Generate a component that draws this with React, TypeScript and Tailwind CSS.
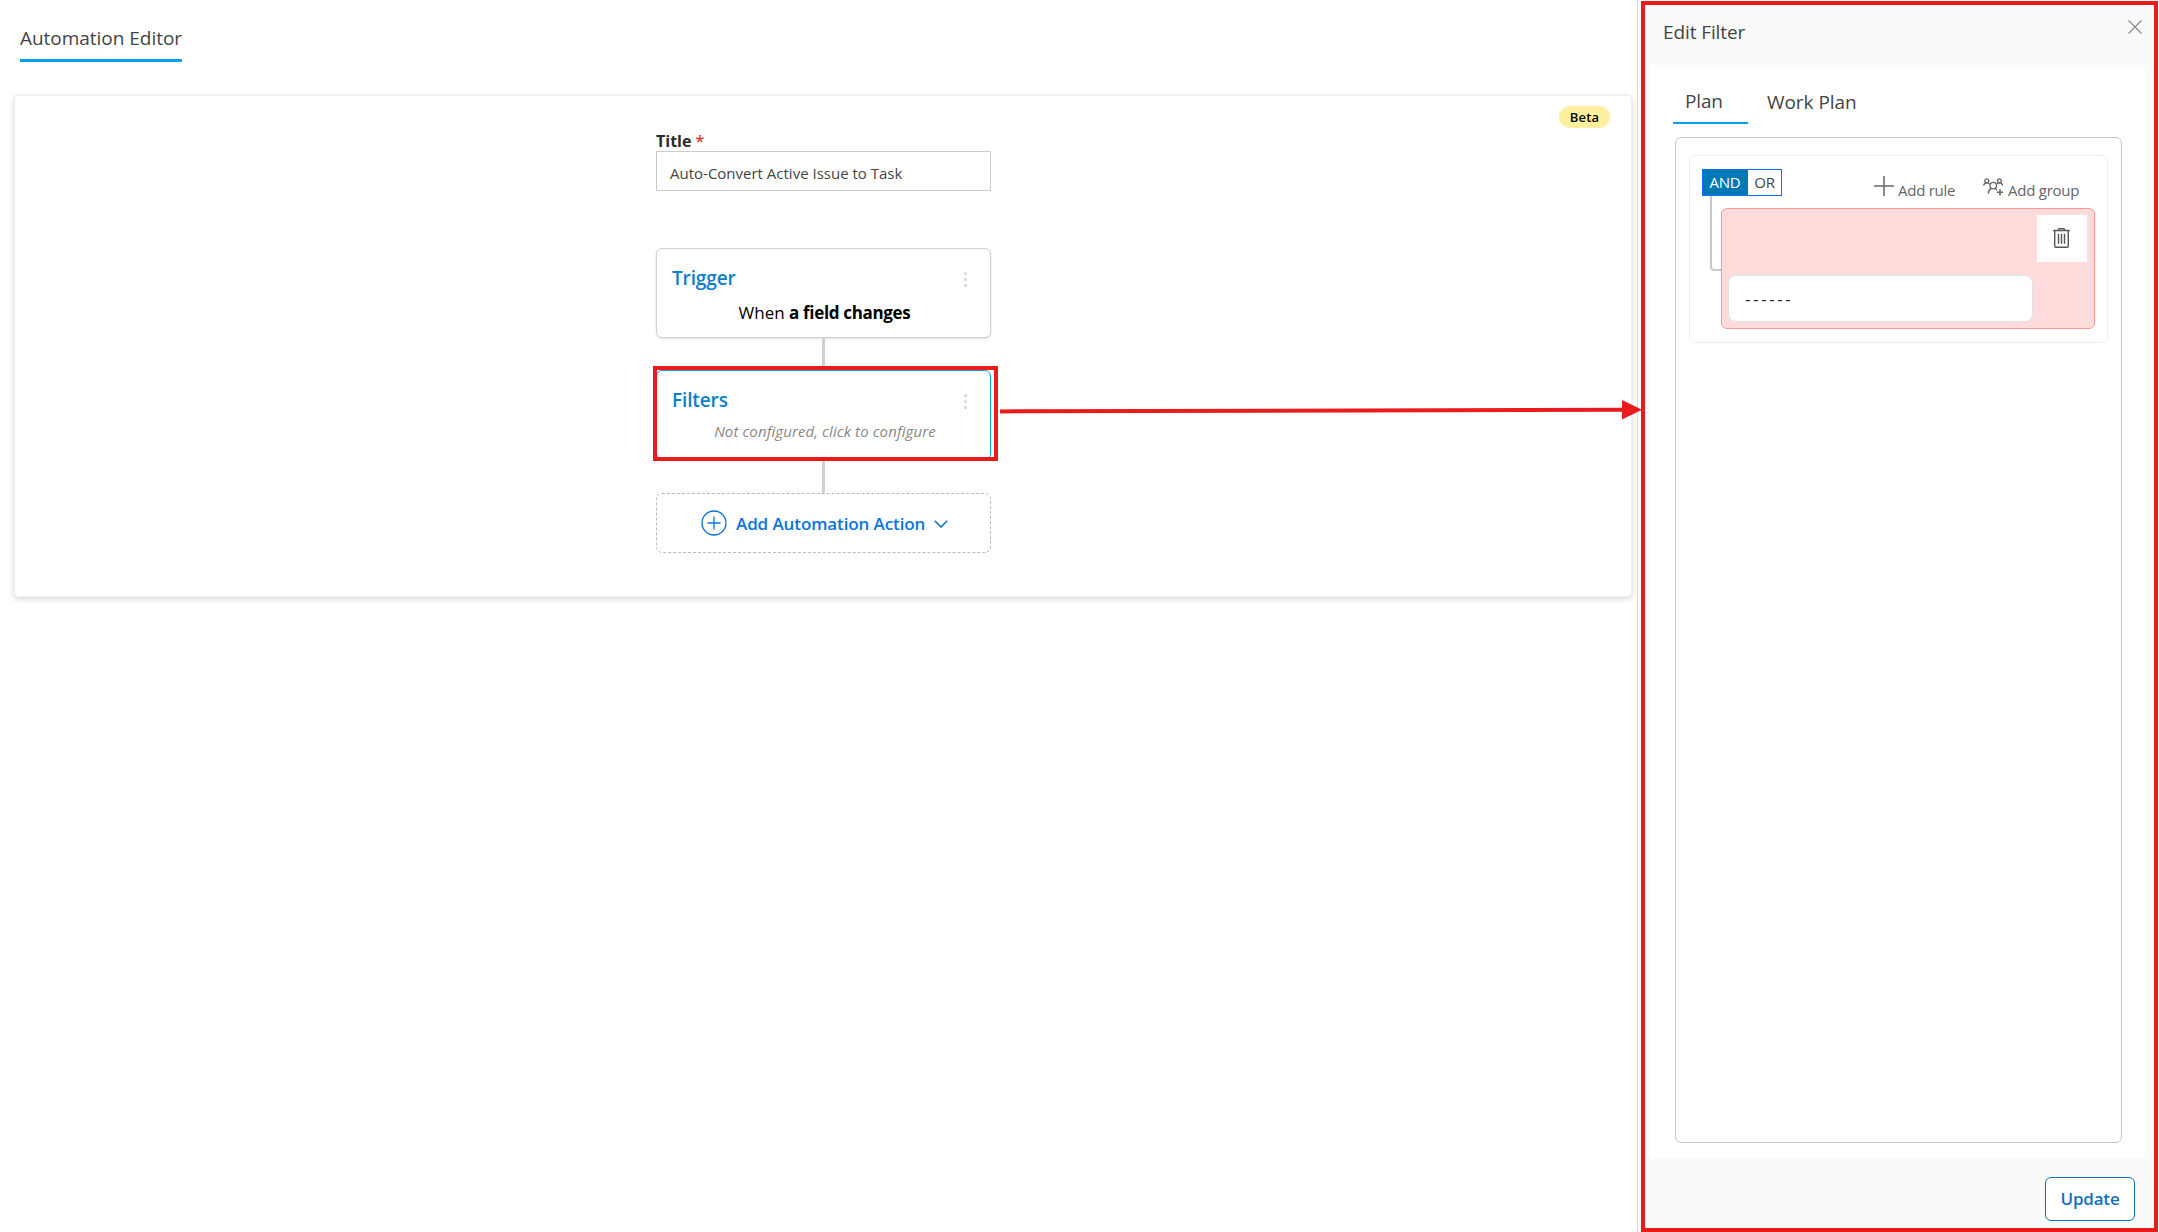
import React from 'react';

// --- Icons ---
const PlusCircleIcon: React.FC = () => (
  <svg className="h-[26px] w-[26px] shrink-0" viewBox="0 0 26 26" fill="none" stroke="currentColor" strokeWidth="1.3">
    <circle cx="13" cy="13" r="12" />
    <path d="M6.5 13h13M13 6.5v13" />
  </svg>
);

const ChevronIcon: React.FC = () => (
  <svg className="h-2 w-3.5 shrink-0" viewBox="0 0 14 8" fill="none" stroke="currentColor" strokeWidth="1.6">
    <path d="M0.8 0.8L7 7l6.2-6.2" />
  </svg>
);

const CloseIcon: React.FC = () => (
  <svg className="h-3.5 w-3.5" viewBox="0 0 14 14" fill="none" stroke="currentColor" strokeWidth="1.2">
    <path d="M0.5 0.5l13 13M13.5 0.5l-13 13" />
  </svg>
);

const PlusIcon: React.FC = () => (
  <svg className="h-5 w-5 shrink-0" viewBox="0 0 20 20" fill="none" stroke="currentColor" strokeWidth="1.5">
    <path d="M0 10h20M10 0v20" />
  </svg>
);

const AddGroupIcon: React.FC = () => (
  <svg className="h-[18px] w-[21px] shrink-0" viewBox="0 0 21 18" fill="none" stroke="currentColor" strokeWidth="1.3">
    <circle cx="3.8" cy="2.8" r="2" />
    <circle cx="16.4" cy="2.8" r="2" />
    <circle cx="10.2" cy="7.6" r="3.3" />
    <path d="M0.7 7.6C0.9 5.8 2.1 4.9 3.8 4.9c1.3 0 2.3 0.5 3 1.4" />
    <path d="M19.6 7.6c-0.2-1.8-1.4-2.7-3.2-2.7-1.3 0-2.3 0.5-3 1.4" />
    <path d="M5.2 15.6c0.3-2.7 1.3-4.4 3.1-5.2M12.1 10.4c0.9 0.5 1.5 1.1 1.9 2" />
    <path d="M17 11.2v6.2M13.9 14.3h6.2" strokeWidth="1.6" />
  </svg>
);

const TrashIcon: React.FC = () => (
  <svg className="h-5 w-[17px]" viewBox="0 0 17 20" fill="none" stroke="currentColor" strokeWidth="1.4">
    <path d="M0.3 2.5h16.4M5.7 2.5V1.5c0-0.500 0.400-0.900 0.900-0.900h3.800c0.500 0 0.900 0.400 0.900 0.900v1" />
    <path d="M1.700 2.500v15.500c0 0.800 0.500 1.300 1.300 1.300h11c0.800 0 1.300-0.500 1.300-1.300V2.500" />
    <path d="M5.500 5.800v10M8.500 5.800v10M11.500 5.800v10" />
  </svg>
);

// --- Flow card ---
interface FlowCardProps {
  title: string;
  active?: boolean;
  children: React.ReactNode;
}

const FlowCard: React.FC<FlowCardProps> = ({ title, active, children }) => (
  <div
    className={`h-[90px] w-full rounded-md border bg-white ${
      active ? 'border-[#0aa0ee]' : 'border-[#cfd0d2] shadow-sm'
    }`}
  >
    <div className="flex justify-between pt-[17px] pr-[23px] pl-[15px]">
      <h3 className="text-[19px] leading-6 font-semibold tracking-[-0.12px] text-[#0a80cc]">{title}</h3>
      <div className="mt-[6px] flex flex-col gap-[3px]">
        <span className="h-[3px] w-[3px] rounded-full bg-[#d3d3d3]" />
        <span className="h-[3px] w-[3px] rounded-full bg-[#d3d3d3]" />
        <span className="h-[3px] w-[3px] rounded-full bg-[#d3d3d3]" />
      </div>
    </div>
    {children}
  </div>
);

const Connector: React.FC<{ className: string }> = ({ className }) => (
  <div className={`w-[3px] bg-[#cfd0d6] ${className}`} />
);

// --- Automation editor ---
const AutomationEditor: React.FC = () => (
  <main className="w-[1637px] shrink-0">
    <div className="flex pt-[26px] pl-5">
      <h1 className="border-b-[3px] border-[#03a2f0] pb-[9px] text-[19px] leading-6 tracking-[-0.03px] whitespace-nowrap text-[#444]">
        Automation Editor
      </h1>
    </div>

    <section className="relative mt-[33px] ml-[14px] flex h-[502px] w-[1618px] flex-col items-center rounded border border-[#eee] bg-white pt-9 pl-px shadow-[0_2px_6px_rgba(0,0,0,0.16)]">
      <span className="absolute top-[10px] right-[21px] flex h-[22px] w-[51px] items-center justify-center rounded-full bg-[#fff0a0] pt-px text-[13px] font-semibold tracking-[0.25px] text-black">
        Beta
      </span>

      <div className="flex w-[335px] flex-col items-center">
        <label className="w-full text-[16px] leading-[19px] font-bold text-[#2b2b2b]">
          Title <span className="font-semibold text-[#d83b2b]">*</span>
        </label>
        <div className="flex h-10 w-full items-center border border-[#ccc] pt-[5px] pl-[13px] text-[15px] text-[#444]">
          Auto-Convert Active Issue to Task
        </div>

        <div className="h-[57px]" />
        <FlowCard title="Trigger">
          <p className="mt-[11px] pl-[2px] text-center text-[17px] leading-6 text-black">
            When <b className="font-bold tracking-[-0.33px]">a field changes</b>
          </p>
        </FlowCard>
        <Connector className="h-8" />
        <FlowCard title="Filters" active>
          <p className="mt-[7px] pl-[3px] text-center text-[15px] leading-6 tracking-[0.1px] text-[#888] italic">
            Not configured, click to configure
          </p>
        </FlowCard>
        <Connector className="h-[33px]" />
        <button className="flex h-[60px] w-full items-center rounded-md border border-dashed border-[#bbb] pl-[44px] text-[#0b74dc]">
          <PlusCircleIcon />
          <span className="ml-[9px] w-[190px] pt-[2px] text-left text-[17px] leading-6 font-semibold tracking-[-0.1px] whitespace-nowrap">
            Add Automation Action
          </span>
          <span className="ml-[8px] pt-[2px]">
            <ChevronIcon />
          </span>
        </button>
      </div>
    </section>
  </main>
);

// --- Filter rule builder ---
const RuleBuilder: React.FC = () => (
  <div className="h-[188px] rounded-md border border-[#eee] pt-[13px] pr-3 pl-3">
    <div className="flex h-8 items-start">
      <div className="flex h-[27px] w-20 border border-[#0d6efd] text-[15px] leading-6 tracking-[-0.3px]">
        <span className="w-[45px] border-r border-[#0d6efd] bg-[#0078b6] text-center text-white">AND</span>
        <span className="flex-1 text-center text-[#444]">OR</span>
      </div>
      <div className="ml-auto flex pr-[15px] text-[15px] leading-6 tracking-[-0.25px] text-[#666]">
        <button className="flex pt-[7px]">
          <PlusIcon />
          <span className="mt-[2px] ml-1 w-[57px] text-left whitespace-nowrap">Add rule</span>
        </button>
        <button className="ml-[28px] flex pt-[9px]">
          <AddGroupIcon />
          <span className="ml-1 w-[72px] text-left whitespace-nowrap">Add group</span>
        </button>
      </div>
    </div>
    <div className="flex">
      <div className="-mt-[5px] ml-2 h-[75px] w-[11px] rounded-bl border-b-2 border-l-2 border-[#c8c8c8]" />
      <div className="mt-[7px] h-[121px] w-[374px] rounded-md border border-[#ff9696] bg-[#ffdcdc] p-[6px]">
        <div className="flex justify-end pr-[1px]">
          <button className="flex h-[47px] w-[50px] items-center justify-center bg-white pr-px pb-px text-[#555]">
            <TrashIcon />
          </button>
        </div>
        <div className="mt-[13px] flex h-[47px] w-[305px] items-center rounded-lg border border-[#dee2e6] bg-white pl-4 text-[17px] tracking-[2.6px] text-[#222]">
          ------
        </div>
      </div>
    </div>
  </div>
);

// --- Edit filter panel ---
const EditFilterPanel: React.FC = () => (
  <aside className="flex w-[522px] shrink-0 flex-col border-l border-[#ddd] bg-[#fafafa]">
    <header className="flex h-[65px] justify-between pt-5 pr-[17px] pl-[25px]">
      <h2 className="text-[19px] leading-6 tracking-[-0.1px] text-[#444]">Edit Filter</h2>
      <span className="text-[#8a8a8a]">
        <CloseIcon />
      </span>
    </header>

    <div className="ml-3 flex h-[1093px] w-[497px] flex-col bg-white pl-[23px]">
      <nav className="flex pt-6 text-[19px] leading-6 text-[#444]">
        <span className="h-[35px] w-[75px] border-b-2 border-[#03a2f0] pl-3 tracking-[-0.15px]">Plan</span>
        <span className="mt-[1px] ml-[19px] tracking-[-0.05px]">Work Plan</span>
      </nav>
      <div className="mt-[13px] ml-[2px] h-[1006px] w-[447px] rounded-md border border-[#c8c8c8] px-[13px] pt-[17px]">
        <RuleBuilder />
      </div>
    </div>

    <footer className="flex justify-end pt-[19px] pr-6">
      <button className="h-11 w-[90px] rounded-md border border-[#1070c0] bg-white text-[17px] font-semibold tracking-[-0.2px] text-[#1070c0]">
        Update
      </button>
    </footer>
  </aside>
);

// Red frames and the arrow linking the Filters card to its panel
const Callouts: React.FC = () => (
  <>
    <div className="pointer-events-none absolute top-[366px] left-[653px] h-[95px] w-[345px] border-4 border-[#e81c1c]" />
    <div className="pointer-events-none absolute top-[1px] left-[1641px] h-[1231px] w-[517px] border-4 border-[#e81c1c]" />
    <svg className="pointer-events-none absolute top-[399px] left-[1000px] h-[22px] w-[642px]" viewBox="0 0 642 22">
      <path d="M0 12.4L623 10.7" stroke="#e81c1c" strokeWidth="4" />
      <path d="M622 1v19.5l20-9.8z" fill="#e81c1c" />
    </svg>
  </>
);

const App: React.FC = () => {
  return (
    <div className="relative flex h-[1232px] w-[2159px] overflow-hidden bg-white font-['Open_Sans','Noto_Sans',sans-serif]">
      <AutomationEditor />
      <EditFilterPanel />
      <Callouts />
    </div>
  );
};

export default App;
